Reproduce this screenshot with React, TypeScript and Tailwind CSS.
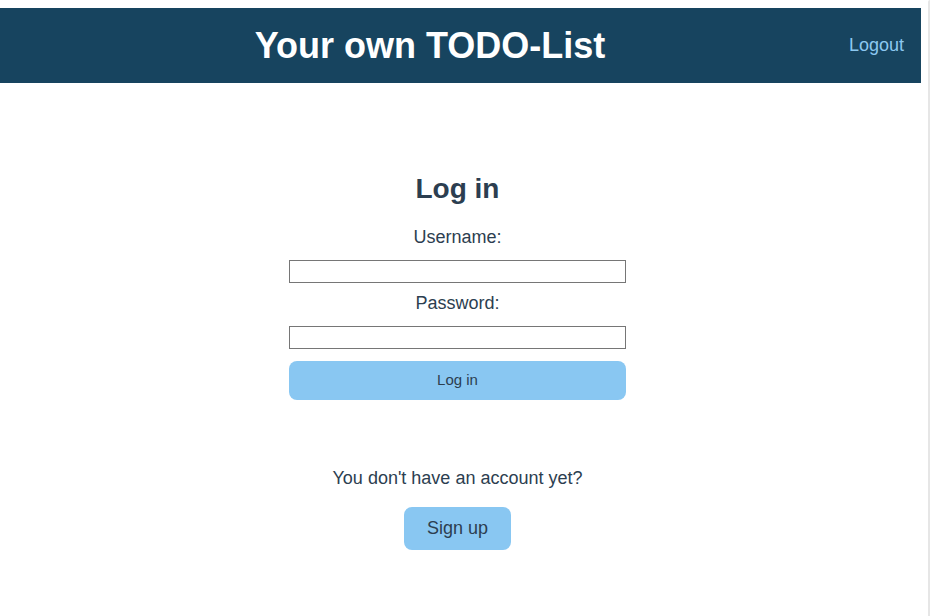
export default function App() {
  return (
    <div className="flex h-[616px] w-[931px] bg-white font-['Liberation_Sans',Arial,sans-serif] text-[#2c3e50]">
      {/* Page */}
      <div className="flex w-[921px] flex-col pt-[8px]">
        <header className="flex h-[75px] items-center bg-[#17445f] pl-[11px] pr-[17px]">
          <h1 className="flex-1 text-center text-[36px] font-bold text-white">Your own TODO-List</h1>
          <a href="#" className="text-[18px] text-[#8cc8f0]">
            Logout
          </a>
        </header>

        <main className="flex w-[915px] flex-col items-center pt-[90px]">
          <h2 className="text-[28px] font-bold leading-[32px]">Log in</h2>

          <form className="mt-[19px] flex w-[337px] flex-col items-center">
            <label className="text-[18px] leading-[26px]">Username:</label>
            <input
              type="text"
              className="mt-[10px] h-[23px] w-full border border-[#767676] bg-white"
            />
            <label className="mt-[7px] text-[18px] leading-[26px]">Password:</label>
            <input
              type="password"
              className="mt-[10px] h-[23px] w-full border border-[#767676] bg-white"
            />
            <button
              type="button"
              className="mt-[12px] h-[39px] w-full rounded-[8px] bg-[#89c7f2] text-[15px] text-[#2c3e50]"
            >
              Log in
            </button>
          </form>

          <p className="mt-[66px] text-[18px] leading-[24px]">You don't have an account yet?</p>
          <button
            type="button"
            className="mt-[17px] h-[43px] w-[107px] rounded-[8px] bg-[#89c7f2] text-[18px] text-[#2c3e50]"
          >
            Sign up
          </button>
        </main>
      </div>

      {/* Right scrollbar edge */}
      <div className="flex w-[10px] justify-end">
        <div className="mr-[1px] h-full w-[2px] rounded-tl-[6px] bg-[#e6e6e6]" />
      </div>
    </div>
  );
}
